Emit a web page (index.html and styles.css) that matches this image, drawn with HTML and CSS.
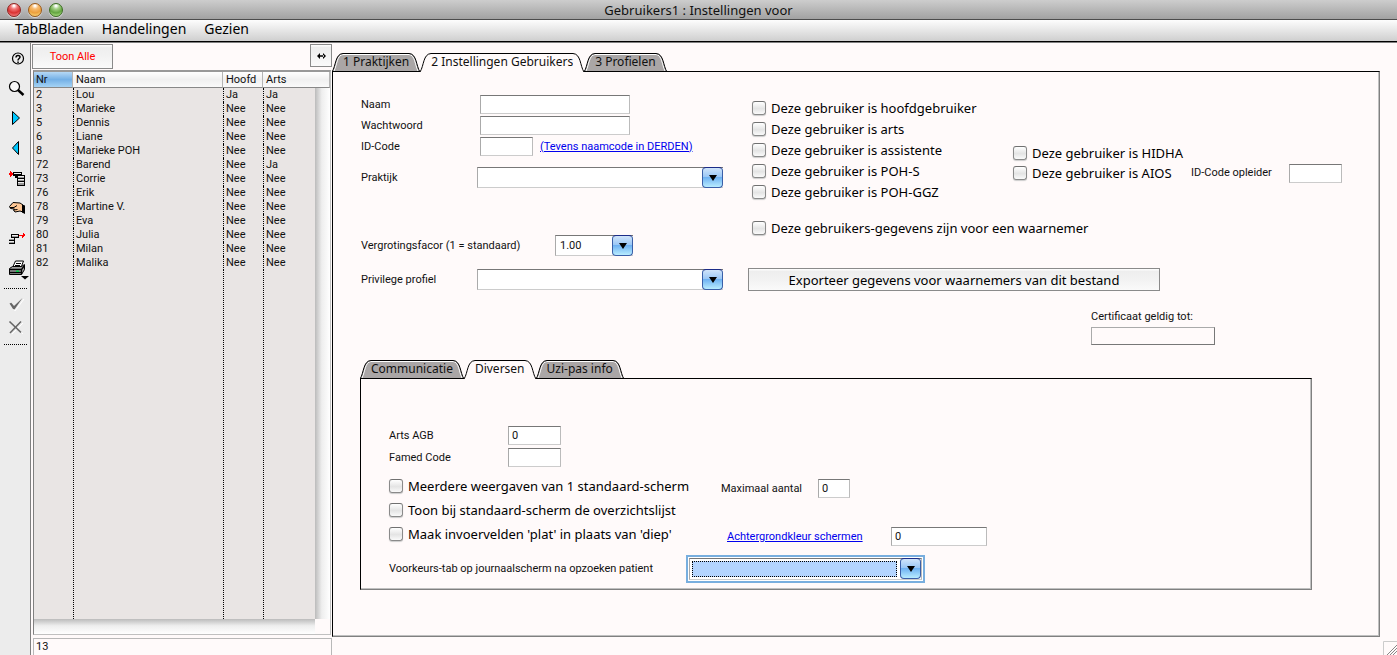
FILE: index.html
```html
<!DOCTYPE html>
<html lang="nl">
<head>
<meta charset="utf-8">
<title>Gebruikers1 : Instellingen voor</title>
<link rel="stylesheet" href="styles.css">
</head>
<body>
<svg class="defs" width="0" height="0" aria-hidden="true">
  <defs>
    <symbol id="cap-left" viewBox="0 0 11 19">
      <path class="cap-fill" d="M0 19 C4 13 3 1 11 0 V19 Z"/>
      <path class="cap-light" d="M2 18 C5 12 5 2 11 1.500"/>
      <path class="cap-line" d="M0 19 C4 13 3 1 11 .5"/>
    </symbol>
    <symbol id="cap-right" viewBox="0 0 11 19">
      <path class="cap-fill" d="M11 19 C7 13 8 1 0 0 V19 Z"/>
      <path class="cap-light" d="M9 18 C6 12 6 2 0 1.500"/>
      <path class="cap-line" d="M11 19 C7 13 8 1 0 .5"/>
    </symbol>
  </defs>
</svg>

<header class="titlebar">
  <div class="lights">
    <button class="light light-red" aria-label="Sluiten"></button>
    <button class="light light-amber" aria-label="Minimaliseren"></button>
    <button class="light light-green" aria-label="Vergroten"></button>
  </div>
  <h1 class="window-title">Gebruikers1 : Instellingen voor</h1>
</header>

<nav class="menubar">
  <button class="menu">TabBladen</button>
  <button class="menu">Handelingen</button>
  <button class="menu">Gezien</button>
</nav>

<div class="workspace">
  <aside class="toolbar">
    <button class="tool" aria-label="Help">
      <svg width="30" height="30" fill="none" stroke="#000"><circle cx="18" cy="15.500" r="5.500" stroke-width="1.200"/><path d="M16 14.500 C16 11.800 20 11.800 20 14 C20 15.500 18 15.500 18 17.500" stroke-width="1.500"/><path d="M17.300 18.500h1.500v1.400h-1.500z" fill="#000" stroke="none"/></svg>
    </button>
    <button class="tool" aria-label="Zoeken">
      <svg width="30" height="30" fill="none" stroke="#000"><circle cx="14.500" cy="13.500" r="5" fill="#f8f8f8" stroke-width="1.200"/><path d="M18 17l5.500 5" stroke-width="2.400"/></svg>
    </button>
    <button class="tool" aria-label="Volgende">
      <svg width="30" height="30"><path d="M12.500 8.500v13l7-6.500z" fill="#00c8ff" stroke="#000"/></svg>
    </button>
    <button class="tool" aria-label="Vorige">
      <svg width="30" height="30"><path d="M18.500 8.500v13l-6-6.500z" fill="#00c8ff" stroke="#000"/></svg>
    </button>
    <button class="tool" aria-label="Invoegen">
      <svg width="30" height="30" shape-rendering="crispEdges"><path d="M9 10h4v2H9z M10 8h1v6h-1z M11 9h1v4h-1z" fill="red"/><path d="M13 9h9v3h3v11h-8v-8h-2v-2h-2z" fill="#000"/><path d="M14 10h7v1h-7z M18 13h6v1h-6z M18 16h6v1h-6z M18 19h6v1h-6z" fill="#eee"/><path d="M18 14h6v1h-6z M18 17h6v1h-6z M18 20h6v2h-6z" fill="#999"/></svg>
    </button>
    <button class="tool" aria-label="Wijzigen">
      <svg width="30" height="30"><path d="M9.500 13.500L13 9.500l7 .5 3 2v7l-3-1-5 1-1.500-2 1-1-4-.5z" fill="#ffc896" stroke="#000"/><path d="M10 14.500h4l3-2M13.500 17l4-.5" fill="none" stroke="#000"/><path d="M22 11.500l3 1V21l-3-1.500z" fill="#000"/></svg>
    </button>
    <button class="tool" aria-label="Verwijderen">
      <svg width="30" height="30" shape-rendering="crispEdges"><path d="M19 12h4V10h1v1h1v2h-1v1h-1v1h-1v-2h-3z" fill="red"/><path d="M11 11h8v4h-4v6H9v-6h2z" fill="#000"/><path d="M12 12h6v1h-6z M9 15h5v1H9z M9 18h5v1H9z" fill="#eee"/><path d="M12 13h6v1h-6z M9 16h5v1H9z M9 19h5v1H9z" fill="#999"/></svg>
    </button>
    <button class="tool" aria-label="Afdrukken">
      <svg width="30" height="30"><path d="M12.500 14.500l3-6.500h8l-2.500 6.500z" fill="#fff" stroke="#000"/><path d="M16 10.500h5M15 12.500h5" stroke="#000"/><path d="M9.500 15.500l3-2h9l3-2v5l-3 5h-12z" fill="#a0a0a0" stroke="#000"/><path d="M9.500 16.500h12v5M10 19.500h11M21.500 16.500l3-4" fill="none" stroke="#000" stroke-width="1.300"/><path d="M16 17.500h3v1.500h-3z" fill="#0c4"/><path d="M21 23h8l-4 3.500z" fill="#000"/></svg>
    </button>
    <hr class="tool-rule">
    <button class="tool tool-short" aria-label="Akkoord">
      <svg width="30" height="24"><path d="M11 14l4 6 9-12" fill="none" stroke="#fff"/><path d="M9.500 12.500l1.800-.8 2.700 3.300L22.500 7 14.500 18.500 13 18z" fill="#666"/></svg>
    </button>
    <button class="tool tool-short" aria-label="Annuleren">
      <svg width="30" height="24"><path d="M11 7l12 12M23 8L12 19" stroke="#fff"/><path d="M9.500 6.500L21 17.500" stroke="#666" stroke-width="1.700"/><path d="M21 6.500L10 18" stroke="#666" stroke-width="1.500"/></svg>
    </button>
    <hr class="tool-rule">
  </aside>

  <section class="sidebar">
    <div class="sidebar-actions">
      <button class="bevel show-all">Toon Alle</button>
      <button class="bevel resize" aria-label="Breedte aanpassen">
        <svg width="9" height="8"><path d="M0 4l3-3v6z M9 4L6 1v6z M2 3.200h5v1.600H2z"/></svg>
      </button>
    </div>
    <div class="list">
      <table class="users">
        <colgroup><col class="col-nr"><col class="col-name"><col class="col-head"><col><col class="col-gutter"></colgroup>
        <thead><tr><th class="sorted">Nr</th><th>Naam</th><th>Hoofd</th><th colspan="2">Arts</th></tr></thead>
        <tbody>
          <tr><td>2</td><td>Lou</td><td>Ja</td><td>Ja</td><td class="gutter" rowspan="14"></td></tr>
          <tr><td>3</td><td>Marieke</td><td>Nee</td><td>Nee</td></tr>
          <tr><td>5</td><td>Dennis</td><td>Nee</td><td>Nee</td></tr>
          <tr><td>6</td><td>Liane</td><td>Nee</td><td>Nee</td></tr>
          <tr><td>8</td><td>Marieke POH</td><td>Nee</td><td>Nee</td></tr>
          <tr><td>72</td><td>Barend</td><td>Nee</td><td>Ja</td></tr>
          <tr><td>73</td><td>Corrie</td><td>Nee</td><td>Nee</td></tr>
          <tr><td>76</td><td>Erik</td><td>Nee</td><td>Nee</td></tr>
          <tr><td>78</td><td>Martine V.</td><td>Nee</td><td>Nee</td></tr>
          <tr><td>79</td><td>Eva</td><td>Nee</td><td>Nee</td></tr>
          <tr><td>80</td><td>Julia</td><td>Nee</td><td>Nee</td></tr>
          <tr><td>81</td><td>Milan</td><td>Nee</td><td>Nee</td></tr>
          <tr><td>82</td><td>Malika</td><td>Nee</td><td>Nee</td></tr>
          <tr class="filler"><td></td><td></td><td></td><td></td></tr>
        </tbody>
        <tfoot><tr><td class="shade" colspan="4"></td><td class="corner"></td></tr></tfoot>
      </table>
    </div>
    <div class="count">13</div>
  </section>

  <main class="content">
    <div class="tabs" role="tablist">
      <button class="tab" role="tab"><svg width="11" height="19"><use href="#cap-left"/></svg><span class="tab-text">1 Praktijken</span><svg width="11" height="19"><use href="#cap-right"/></svg></button>
      <button class="tab active" role="tab" aria-selected="true"><svg width="11" height="19"><use href="#cap-left"/></svg><span class="tab-text">2 Instellingen Gebruikers</span><svg width="11" height="19"><use href="#cap-right"/></svg></button>
      <button class="tab" role="tab"><svg width="11" height="19"><use href="#cap-left"/></svg><span class="tab-text">3 Profielen</span><svg width="11" height="19"><use href="#cap-right"/></svg></button>
    </div>

    <div class="panel panel-main">
      <div class="form">
        <div class="fields">
          <div class="row"><label class="caption" for="naam">Naam</label><input class="box box-long" id="naam" type="text"></div>
          <div class="row"><label class="caption" for="ww">Wachtwoord</label><input class="box box-long" id="ww" type="password"></div>
          <div class="row"><label class="caption" for="idcode">ID-Code</label><input class="box box-code" id="idcode" type="text"><a class="link" href="#derden">(Tevens naamcode in DERDEN)</a></div>
          <div class="row row-praktijk"><label class="caption caption-combo" for="praktijk">Praktijk</label>
            <span class="combo combo-long"><select id="praktijk"><option></option></select><span class="arrow"><svg width="8" height="6"><path d="M0 0h8L4 6z"/></svg></span></span></div>
          <div class="row row-factor"><label class="caption caption-factor" for="factor">Vergrotingsfacor (1 = standaard)</label>
            <span class="combo combo-short"><select id="factor"><option>1.00</option></select><span class="arrow"><svg width="8" height="6"><path d="M0 0h8L4 6z"/></svg></span></span></div>
          <div class="row row-profile"><label class="caption caption-combo" for="profiel">Privilege profiel</label>
            <span class="combo combo-long"><select id="profiel"><option></option></select><span class="arrow"><svg width="8" height="6"><path d="M0 0h8L4 6z"/></svg></span></span></div>
        </div>

        <div class="roles">
          <div class="role-columns">
            <div class="role-list">
              <label class="check"><input type="checkbox">Deze gebruiker is hoofdgebruiker</label>
              <label class="check"><input type="checkbox">Deze gebruiker is arts</label>
              <label class="check"><input type="checkbox">Deze gebruiker is assistente</label>
              <label class="check"><input type="checkbox">Deze gebruiker is POH-S</label>
              <label class="check"><input type="checkbox">Deze gebruiker is POH-GGZ</label>
            </div>
            <div class="role-extra">
              <label class="check"><input type="checkbox">Deze gebruiker is HIDHA</label>
              <div class="row">
                <label class="check check-aios"><input type="checkbox">Deze gebruiker is AIOS</label>
                <label class="caption caption-opleider" for="opleider">ID-Code opleider</label><input class="box box-code" id="opleider" type="text">
              </div>
            </div>
          </div>
          <label class="check check-waarnemer"><input type="checkbox">Deze gebruikers-gegevens zijn voor een waarnemer</label>
          <button class="bevel export">Exporteer gegevens voor waarnemers van dit bestand</button>
          <div class="certificate">
            <label for="cert">Certificaat geldig tot:</label>
            <input id="cert" class="cert-box" type="text" readonly>
          </div>
        </div>
      </div>

      <div class="details">
        <div class="tabs" role="tablist">
          <button class="tab" role="tab"><svg width="11" height="19"><use href="#cap-left"/></svg><span class="tab-text">Communicatie</span><svg width="11" height="19"><use href="#cap-right"/></svg></button>
          <button class="tab active" role="tab" aria-selected="true"><svg width="11" height="19"><use href="#cap-left"/></svg><span class="tab-text">Diversen</span><svg width="11" height="19"><use href="#cap-right"/></svg></button>
          <button class="tab" role="tab"><svg width="11" height="19"><use href="#cap-left"/></svg><span class="tab-text">Uzi-pas info</span><svg width="11" height="19"><use href="#cap-right"/></svg></button>
        </div>
        <div class="panel panel-details">
          <div class="row"><label class="caption" for="agb">Arts AGB</label><input class="box box-code" id="agb" type="text" value="0"></div>
          <div class="row row-famed"><label class="caption" for="famed">Famed Code</label><input class="box box-code" id="famed" type="text"></div>
          <div class="options">
            <div class="option"><label class="check check-multi"><input type="checkbox">Meerdere weergaven van 1 standaard-scherm</label><label class="caption caption-max" for="max">Maximaal aantal</label><input class="box box-max" id="max" type="text" value="0"></div>
            <div class="option"><label class="check"><input type="checkbox">Toon bij standaard-scherm de overzichtslijst</label></div>
            <div class="option"><label class="check check-flat"><input type="checkbox">Maak invoervelden 'plat' in plaats van 'diep'</label><a class="link link-colour" href="#kleur">Achtergrondkleur schermen</a><input class="box box-colour" aria-label="Achtergrondkleur schermen" type="text" value="0"></div>
          </div>
          <div class="row row-preferred"><label class="caption caption-preferred" for="voorkeur">Voorkeurs-tab op journaalscherm na opzoeken patient</label>
            <span class="combo combo-focus"><select id="voorkeur"><option></option></select><span class="arrow"><svg width="8" height="6"><path d="M0 0h8L4 6z"/></svg></span></span></div>
        </div>
      </div>
    </div>
    <footer class="status"><svg class="grip" width="14" height="14"><path d="M.5 14V.5H14" fill="none" stroke="#ccc"/><path d="M4 14L14 4M7 14l7-7M10 14l4-4" stroke="#888"/></svg></footer>
  </main>
</div>
</body>
</html>
```

FILE: styles.css
```css
:root {
  --paper: #fffafa;
  --small: 11px/14px Roboto, sans-serif;
  --tab: 12px/17px "Noto Sans", sans-serif;
  --large: 13px/20px "Noto Sans", sans-serif;
}

* { box-sizing: border-box; }

body {
  margin: 0;
  min-height: 100vh;
  display: flex;
  flex-direction: column;
  background: var(--paper);
  color: #111;
  font: var(--small);
}

button, input, select { font: inherit; color: inherit; margin: 0; }
button { padding: 0; border: 0; background: none; }
.defs { position: absolute; }

.titlebar {
  display: grid;
  grid-template-columns: 1fr auto 1fr;
  align-items: center;
  height: 20px;
  background: linear-gradient(#cdcdcd, #a2a2a2);
  border-bottom: 1px solid #4c4c4c;
}
.lights { display: flex; gap: 7px; padding-left: 7px; }
.light {
  width: 14px;
  height: 14px;
  border: 1px solid;
  border-radius: 50%;
  box-shadow: 0 1px 1px #ddd;
}
.light-red { background: radial-gradient(circle at 50% 15%, #fff 5%, #f27878 28%, #d93232 60%, #ffa0a0); border-color: #8c2420; }
.light-amber { background: radial-gradient(circle at 50% 15%, #fff 5%, #f8bb70 28%, #eda03c 60%, #ffec90); border-color: #9a5a1c; }
.light-green { background: radial-gradient(circle at 50% 15%, #fff 5%, #a3cf85 28%, #63a540 60%, #c8f59c); border-color: #3c6c24; }
.window-title { margin: 0; font: 13px/18px "Noto Sans", sans-serif; }

.menubar {
  display: flex;
  align-items: flex-start;
  gap: 18px;
  height: 22px;
  padding-left: 15px;
  background: linear-gradient(#fdfdfd, #cfcfcf);
  border-bottom: 1px solid #000;
}
.menu { font: 14px/18px "Noto Sans", sans-serif; color: #000; }

.workspace { flex: 1; display: flex; border-top: 1px solid #808080; }

.toolbar {
  width: 31px;
  flex: none;
  background: #ececec;
  border-right: 1px solid #808080;
}
.tool { display: block; height: 30px; }
.tool-short { height: 24px; }
.tool svg { display: block; }
.tool-rule { margin: 5px 3px 2px 4px; border: 0; border-top: 1px dotted #000; }

.sidebar {
  display: flex;
  flex: none;
  flex-direction: column;
  width: 301px;
  padding-left: 1px;
}
.sidebar-actions { display: flex; justify-content: space-between; align-items: flex-start; padding: 1px 0 1px; }
.bevel {
  border: 1px solid #8a8a8a;
  background: linear-gradient(#fff, #eee 12%, #f2f2f2 50%, #fafafa);
}
.show-all { width: 81px; height: 25px; color: #f00; }
.resize { display: grid; place-items: center; width: 22px; height: 23px; }

.list {
  flex: 1;
  display: flex;
  width: 298px;
  margin-left: 1px;
  border: solid;
  border-width: 2px 1px 1px;
  border-color: #999 #c0c0c0 #c0c0c0 #808080;
}
.users { width: 100%; border-spacing: 0; table-layout: fixed; }
.col-nr { width: 39px; }
.col-name { width: 150px; }
.col-head { width: 40px; }
.col-gutter { width: 15px; }
.users th {
  height: 16px;
  padding: 0 0 0 3px;
  font-weight: normal;
  text-align: left;
  background: linear-gradient(#fff, #f0f0f0 50%, #fafafa);
  border-right: 1px solid #b5b5b5;
  border-bottom: 1px solid #888;
}
.users .sorted { padding-left: 2px; background: linear-gradient(#b5d8f5, #74b0e6 50%, #a5d3f5); }
.users td {
  height: 14px;
  padding: 0 0 0 2px;
  background: #e9e5e4;
  line-height: 14px;
}
.users tbody td + td { border-left: 1px dotted #000; }
.users .filler td { height: auto; }
.users tbody .gutter { border-left: 0; background: linear-gradient(90deg, #bbb, #eee 45%, #fff); }
.users .shade { height: 15px; padding: 0; background: linear-gradient(#bbb, #eee 45%, #fff); }
.users .corner { padding: 0; background: var(--paper); }

.count {
  width: 299px;
  height: 17px;
  margin: 3px 0 0 1px;
  padding: 1px 2px;
  border: 1px solid #b8b8b8;
  border-bottom: 0;
}

.content { flex: 1; min-width: 0; display: flex; flex-direction: column; padding-top: 10px; }
.tabs { display: flex; }
.tab { display: flex; height: 18px; overflow: hidden; font: var(--tab); --fill: #aaa6a6; --light: #fff; }
.tab.active { position: relative; height: 19px; margin-bottom: -1px; --fill: var(--paper); --light: var(--paper); }
.tab svg { display: block; flex: none; }
.tab-text { height: 100%; background: var(--fill); border-top: 1px solid #000; box-shadow: inset 0 1px var(--light); line-height: 16px; }
.cap-fill { fill: var(--fill); }
.cap-line { fill: none; stroke: #000; stroke-width: 1px; }
.cap-light { fill: none; stroke: var(--light); }

.panel {
  border: solid;
  border-width: 1px;
  border-color: #000 #808080 #808080 #000;
  box-shadow: inset -1px -1px #c0c0c0;
}
.panel-main { flex: 1; margin-right: 17px; padding: 23px 37px 40px 27px; }
.form { display: flex; min-height: 265px; padding-left: 1px; }
.fields { display: flex; flex-direction: column; gap: 2px; width: 387px; flex: none; }
.row { display: flex; align-items: center; }
.caption { width: 119px; }
.caption-combo { width: 116px; }
.caption-factor { width: 194px; }
.row-praktijk { margin-top: 9px; }
.row-factor { margin-top: 45px; }
.row-profile { margin-top: 11px; }

.box {
  height: 19px;
  padding: 0 3px;
  background: #fff;
  border: 1px solid;
  border-color: #777 #bbb #ccc #aaa;
  border-radius: 0;
}
.box-long { width: 150px; }
.box-code { width: 53px; }
.box-max { width: 32px; }
.box-colour { width: 96px; }
.link { color: #00e; text-decoration: underline; }
.row .link { margin-left: 7px; }

.combo {
  display: flex;
  height: 21px;
  background: #fff;
  border: solid;
  border-width: 1px 0 1px 1px;
  border-color: #777 #bbb #ccc #aaa;
}
.combo select { flex: 1; min-width: 0; padding: 0 4px; border: 0; background: none; appearance: none; }
.combo-long { width: 246px; }
.combo-short { width: 78px; }
.arrow {
  display: grid;
  place-items: center;
  width: 21px;
  height: 21px;
  margin-top: -1px;
  border: 1px solid #3a5fa8;
  border-top-color: #1c2c88;
  border-radius: 4px;
  background: linear-gradient(#d0e4fa, #9cc8f6 45%, #6fb2f2 50%, #b8ecff);
}
.combo-focus {
  width: 233px;
  height: 22px;
  margin: 3px;
  border-width: 1px;
  outline: 2px solid #78aede;
  outline-offset: 1px;
  box-shadow: 0 0 0 1px #fff;
}
.combo-focus select { margin: 2px 3px 2px 2px; border: 1px dotted #000; background: #b4d5ff; outline: 0; }

.check { display: flex; align-items: center; gap: 5px; height: 21px; font: var(--large); color: #000; white-space: nowrap; }
.check input {
  flex: none;
  width: 14px;
  height: 14px;
  appearance: none;
  border: 1px solid #8a8a8a;
  border-top-color: #707070;
  border-radius: 3px;
  background: linear-gradient(#fff, #e4e4e4 55%, #fafafa);
  box-shadow: 0 1px 1px #ccc;
}

.roles { flex: 1; min-width: 0; display: flex; flex-direction: column; padding-top: 2px; }
.role-columns { display: flex; padding-left: 4px; }
.role-list { width: 261px; flex: none; }
.role-extra { padding-top: 46px; }
.role-extra .check { height: 20px; }
.check-aios { width: 178px; }
.caption-opleider { width: 98px; }
.check-waarnemer { margin: 15px 0 30px 4px; }
.export { align-self: flex-start; width: 412px; height: 23px; font: var(--large); color: #000; }
.certificate { display: flex; flex-direction: column; align-items: flex-start; gap: 3px; margin: 19px 0 0 343px; }
.cert-box { width: 124px; height: 18px; background: var(--paper); border: 1px solid; border-color: #aaa #777 #777 #aaa; }

.details { margin-right: 30px; }
.panel-details { padding: 47px 28px 6px; }
.row-famed { margin-top: 3px; }
.options { padding-top: 7px; }
.option { display: flex; align-items: flex-end; min-height: 24px; }
.option .check { height: 24px; }
.option .caption, .option .link { line-height: 19px; }
.check-multi { width: 332px; }
.caption-max { width: 97px; }
.check-flat { width: 338px; }
.link-colour { width: 164px; }
.row-preferred { margin-top: 9px; }
.caption-preferred { width: 297px; }

.status { display: flex; justify-content: flex-end; align-items: flex-end; height: 18px; }
.grip { display: block; }
```
